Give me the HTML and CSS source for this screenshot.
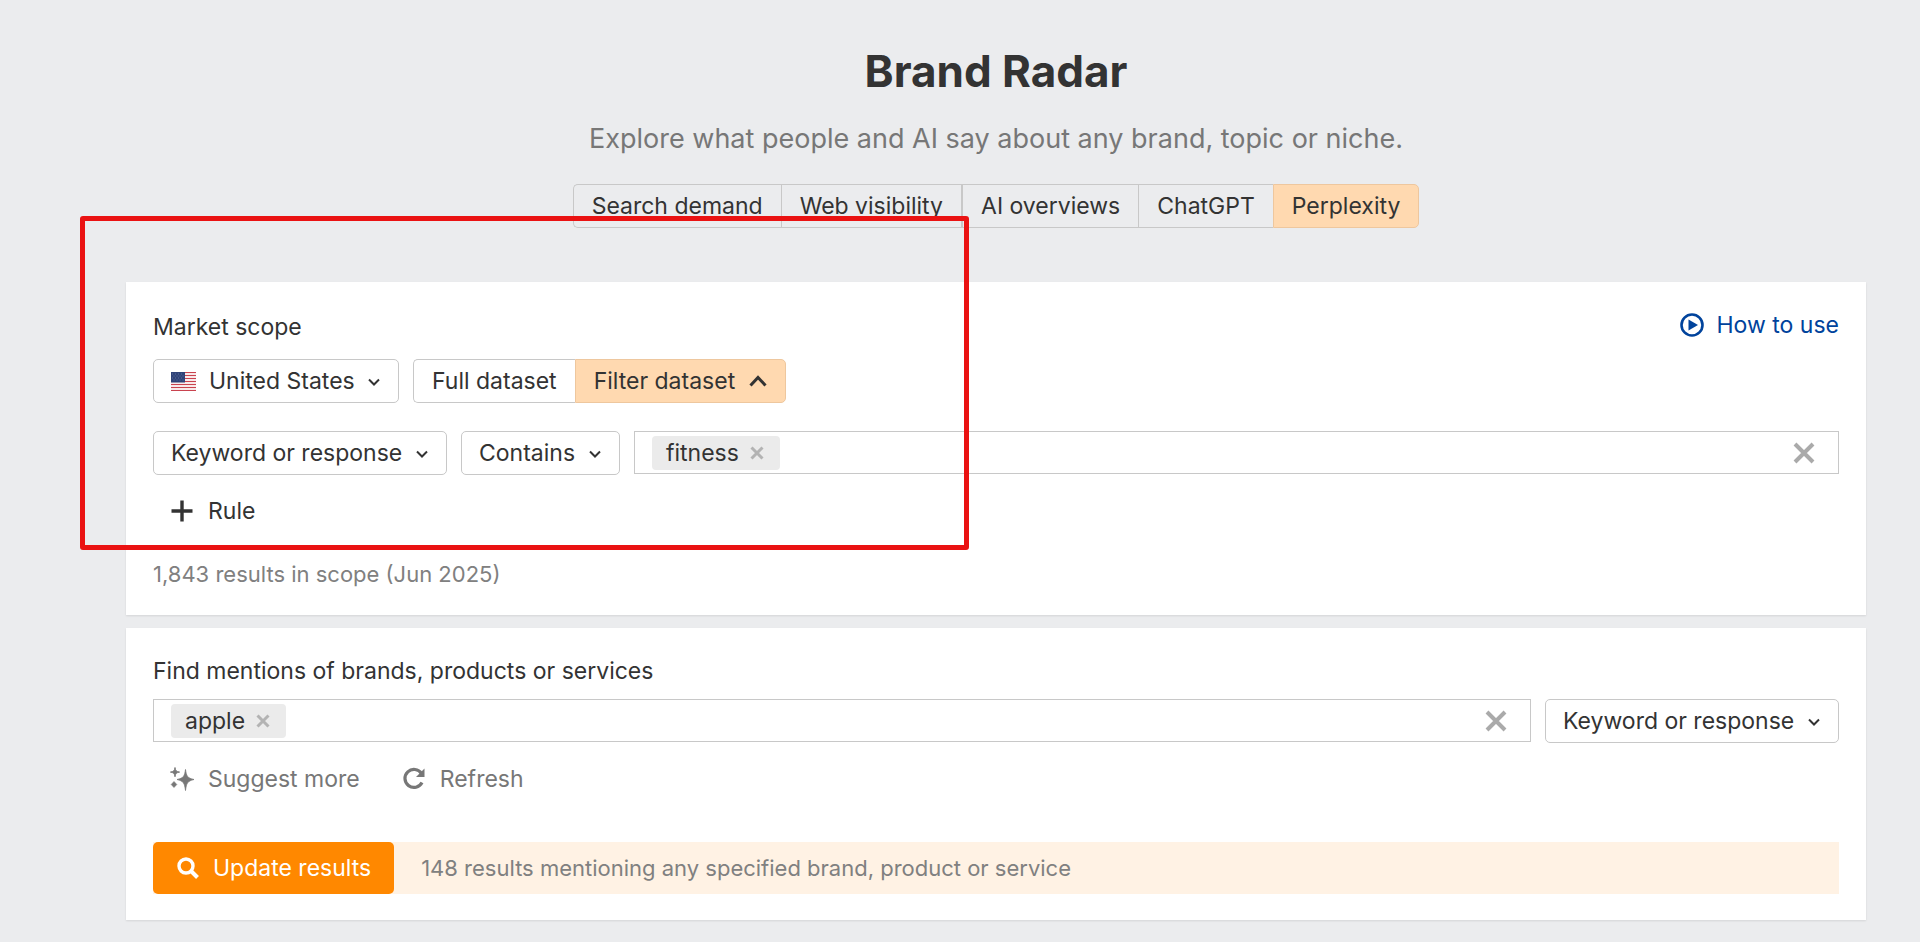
FILE: index.html
```html
<!DOCTYPE html>
<html lang="en">
  <head>
    <meta charset="UTF-8" />
    <meta name="viewport" content="width=device-width, initial-scale=1.0" />
    <title>Brand Radar</title>
    <link rel="stylesheet" href="styles.css">
  </head>
  <body>
    <main class="page">
      <header class="hero">
        <h1 class="hero-title">Brand Radar</h1>
        <p class="hero-text">Explore what people and AI say about any brand, topic or niche.</p>
        <div class="segmented">
          <button type="button">Search demand</button>
          <button type="button">Web visibility</button>
          <button type="button" class="group-start">AI overviews</button>
          <button type="button">ChatGPT</button>
          <button type="button" class="active">Perplexity</button>
        </div>
      </header>

      <!-- Market scope -->
      <section class="panel scope">
        <div class="panel-head">
          <h2 class="panel-title">Market scope</h2>
          <a class="help-link" href="#">
            <svg width="24" height="24" viewBox="0 0 24 24">
              <circle cx="12" cy="12" r="10.5" fill="none" stroke="currentColor" stroke-width="2.6" />
              <path d="M8.5 6.5v11L18 12z" fill="currentColor" />
            </svg>
            How to use
          </a>
        </div>

        <div class="row">
          <div class="dropdown">
            <svg class="flag" width="25" height="19" viewBox="0 0 25 19">
              <path fill="#f8e9ea" d="M0 0h25v19H0z" />
              <path stroke="#c9434f" d="M0 .5h25M0 3.5h25M0 6.5h25M0 9.5h25M0 12.5h25M0 15.5h25M0 18.5h25" />
              <path fill="#2f4378" d="M0 0h14v10.5H0z" />
              <path stroke="#5d6f9c" stroke-dasharray="1 2" d="M1 2h12M2.5 4h10M1 6h12M2.5 8h10" />
            </svg>
            <select aria-label="Country">
              <option>United States</option>
            </select>
            <svg class="chevron" width="12" height="12" viewBox="0 0 12 12"><path d="M1 4.5l5 5 5-5" /></svg>
          </div>
          <div class="segmented">
            <button type="button">Full dataset</button>
            <button type="button" class="active">
              Filter dataset
              <svg class="caret-up" width="18" height="12" viewBox="0 0 18 12"><path d="M1.5 10.500L9 2.500l7.500 8" /></svg>
            </button>
          </div>
        </div>

        <div class="row rule-row">
          <div class="dropdown">
            <select aria-label="Rule field">
              <option>Keyword or response</option>
            </select>
            <svg class="chevron" width="12" height="12" viewBox="0 0 12 12"><path d="M1 4.5l5 5 5-5" /></svg>
          </div>
          <div class="dropdown">
            <select aria-label="Rule condition">
              <option>Contains</option>
            </select>
            <svg class="chevron" width="12" height="12" viewBox="0 0 12 12"><path d="M1 4.5l5 5 5-5" /></svg>
          </div>
          <div class="tag-input">
            <span class="tag">
              fitness
              <button type="button" aria-label="Remove fitness">
                <svg width="14" height="14" viewBox="0 0 14 14"><path d="M1.5 1.5l11 11M12.5 1.5l-11 11" /></svg>
              </button>
            </span>
            <input type="text" aria-label="Rule value">
            <button type="button" class="clear" aria-label="Clear all">
              <svg width="22" height="22" viewBox="0 0 22 22"><path d="M2 2l18 18M20 2L2 20" /></svg>
            </button>
          </div>
        </div>

        <div class="actions">
          <button type="button" class="text-btn dark">
            <svg width="24" height="24" viewBox="0 0 24 24"><path d="M12 1.5v21M1.5 12h21" fill="none" stroke="currentColor" stroke-width="3.4" /></svg>
            Rule
          </button>
        </div>

        <p class="note">1,843 results in scope (Jun 2025)</p>
      </section>

      <!-- Mentions -->
      <section class="panel mentions">
        <label class="panel-title" for="brands">Find mentions of brands, products or services</label>

        <div class="row brand-row">
          <div class="tag-input">
            <span class="tag">
              apple
              <button type="button" aria-label="Remove apple">
                <svg width="14" height="14" viewBox="0 0 14 14"><path d="M1.5 1.5l11 11M12.5 1.5l-11 11" /></svg>
              </button>
            </span>
            <input type="text" id="brands">
            <button type="button" class="clear" aria-label="Clear all">
              <svg width="22" height="22" viewBox="0 0 22 22"><path d="M2 2l18 18M20 2L2 20" /></svg>
            </button>
          </div>
          <div class="dropdown">
            <select aria-label="Search in">
              <option>Keyword or response</option>
            </select>
            <svg class="chevron" width="12" height="12" viewBox="0 0 12 12"><path d="M1 4.5l5 5 5-5" /></svg>
          </div>
        </div>

        <div class="actions">
          <button type="button" class="text-btn">
            <svg width="24" height="24" viewBox="0 0 24 24" fill="currentColor">
              <path d="M15.5 2.500c.9 6.800 2 8.600 8.500 10-6.500 1.500-7.600 3.500-8.500 11-.9-7.500-2-9.500-8.500-11 6.500-1.400 7.600-3.200 8.500-10z" stroke="currentColor" stroke-width=".8" />
              <path d="M5 .5c.5 3.200 1.300 4 4.600 4.600C6.300 5.700 5.500 6.500 5 9.800 4.500 6.500 3.700 5.700.4 5.100 3.700 4.500 4.500 3.700 5 .5z" stroke="currentColor" stroke-width=".9" />
              <path d="M4 14.5l2.800 3-2.800 3-2.800-3z" stroke="currentColor" stroke-width=".6" />
            </svg>
            Suggest more
          </button>
          <button type="button" class="text-btn">
            <svg width="24" height="24" viewBox="0 0 24 24">
              <path d="M19.5 6.500A9 9 0 1 0 20 15.500" fill="none" stroke="currentColor" stroke-width="3.2" />
              <path d="M22.5 1.500V10H14z" fill="currentColor" />
            </svg>
            Refresh
          </button>
        </div>

        <div class="submit-bar">
          <button type="submit" class="submit-btn">
            <svg width="24" height="24" viewBox="0 0 24 24" fill="none" stroke="currentColor">
              <circle cx="10" cy="10" r="7" stroke-width="3.4" />
              <path d="M14.5 14.5l7 7" stroke-width="4" />
            </svg>
            Update results
          </button>
          <p class="note">148 results mentioning any specified brand, product or service</p>
        </div>
      </section>

      <!-- Highlight over the scope filters -->
      <div class="highlight"></div>
    </main>
  </body>
</html>
```

FILE: styles.css
```css
* {
  box-sizing: border-box;
}

body {
  margin: 0;
  background: #ebecee;
  color: #333;
  font-family: Inter, sans-serif;
  font-size: 23px;
  line-height: 30px;
}

h1,
h2,
p {
  margin: 0;
  font-weight: 400;
}

button,
input,
select {
  margin: 0;
  padding: 0;
  border: 0;
  background: none;
  color: inherit;
  font: inherit;
}

button {
  cursor: pointer;
}

svg {
  display: block;
  flex: none;
}

.page {
  position: relative;
  padding: 44px 54px 20px 126px;
}

/* Header */
.hero {
  display: flex;
  flex-direction: column;
  align-items: center;
}

.hero-title {
  font-size: 44px;
  line-height: 54px;
  font-weight: 700;
}

.hero-text {
  margin-top: 24px;
  color: #777;
  font-size: 27px;
  line-height: 34px;
}

.segmented {
  display: flex;
}

.segmented button {
  display: flex;
  align-items: center;
  gap: 14px;
  height: 44px;
  padding: 0 18px;
  border: 1px solid #c8c8c8;
  border-right-width: 0;
}

.segmented button:first-child {
  border-radius: 5px 0 0 5px;
}

.segmented button:last-child {
  border-right-width: 1px;
  border-radius: 0 5px 5px 0;
}

.segmented .group-start {
  border-left-width: 2px;
}

.segmented .active {
  background: #ffd9b0;
  border-color: #eec79e;
}

.hero .segmented {
  margin-top: 28px;
}

/* Panels */
.panel {
  padding: 28px 27px 26px;
  background: #fff;
  box-shadow: 0 1px 2px rgba(0, 0, 0, 0.1);
}

.scope {
  margin-top: 54px;
}

.mentions {
  margin-top: 13px;
}

.panel-head {
  display: flex;
  justify-content: space-between;
  align-items: flex-start;
}

.panel-title {
  display: block;
  font-size: 23px;
}

.panel-head .panel-title {
  padding-top: 2px;
}

.help-link {
  display: flex;
  align-items: center;
  gap: 13px;
  color: #00439c;
  text-decoration: none;
}

.row {
  display: flex;
  gap: 14px;
  margin-top: 17px;
}

.rule-row {
  margin-top: 28px;
}

.brand-row {
  margin-top: 13px;
}

.dropdown {
  display: flex;
  align-items: center;
  height: 44px;
  padding: 0 18px 0 17px;
  border: 1px solid #c8c8c8;
  border-radius: 5px;
}

.dropdown select {
  appearance: none;
  outline: none;
}

.flag {
  margin-right: 13px;
}

.chevron {
  margin-left: 13px;
}

.chevron path,
.caret-up path {
  fill: none;
  stroke: #333;
  stroke-width: 2;
}

.caret-up path {
  stroke-width: 3;
}

/* Text box with removable tags */
.tag-input {
  display: flex;
  flex: 1;
  align-items: center;
  height: 43px;
  padding: 0 23px 0 17px;
  border: 1px solid #c8c8c8;
}

.tag-input input {
  flex: 1;
  min-width: 0;
  outline: none;
}

.tag {
  display: flex;
  align-items: center;
  gap: 11px;
  height: 34px;
  padding: 0 16px 0 14px;
  border-radius: 4px;
  background: #ebebeb;
}

.tag path {
  fill: none;
  stroke: #b3b3b3;
  stroke-width: 3;
}

.clear path {
  fill: none;
  stroke: #aaa;
  stroke-width: 4;
}

.actions {
  display: flex;
  gap: 42px;
  margin-top: 21px;
  padding-left: 17px;
}

.text-btn {
  display: flex;
  align-items: center;
  gap: 14px;
  color: #777;
}

.text-btn.dark {
  color: #333;
}

.note {
  color: #808080;
  font-size: 22px;
}

.scope .note {
  margin-top: 33px;
}

.submit-bar {
  display: flex;
  align-items: center;
  margin-top: 48px;
  background: #fff2e4;
}

.submit-btn {
  display: flex;
  align-items: center;
  gap: 13px;
  height: 52px;
  margin-right: 27px;
  padding: 0 23px;
  border-radius: 5px;
  background: #ff8800;
  color: #fff;
}

.highlight {
  position: absolute;
  top: 216px;
  left: 80px;
  width: 889px;
  height: 334px;
  border: 5px solid #ea1212;
  border-radius: 3px;
  pointer-events: none;
}
```
